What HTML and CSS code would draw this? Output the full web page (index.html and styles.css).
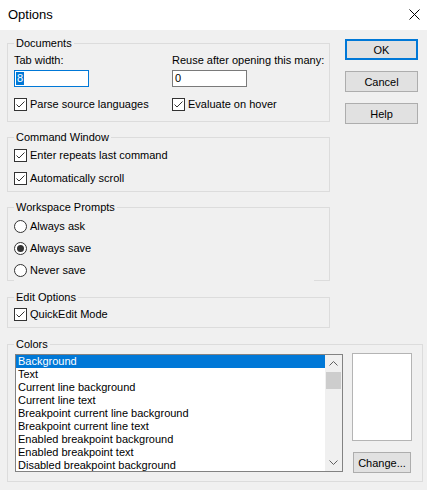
FILE: index.html
```html
<!DOCTYPE html>
<html>
<head>
<meta charset="utf-8">
<link rel="stylesheet" href="styles.css">
</head>
<body>
<div class="titlebar">
  <span class="title">Options</span>
  <svg class="close" width="11" height="11" viewBox="0 0 11 11"><path d="M0.5 0.5 L10.5 10.5 M10.5 0.5 L0.5 10.5" stroke="#000" stroke-width="1" fill="none"/></svg>
</div>
<div class="main">
  <div class="top">
    <div class="left">
      <fieldset class="group docs">
        <legend>Documents</legend>
        <div class="docs-grid">
          <div class="lbl">Tab width:</div>
          <div class="lbl">Reuse after opening this many:</div>
          <div class="textbox focus"><span class="sel">8</span></div>
          <div class="textbox"><span>0</span></div>
          <div class="check row-check"><svg class="cb" width="13" height="13" viewBox="0 0 13 13"><rect x="0.5" y="0.5" width="12" height="12" fill="#fff" stroke="#333"/><path d="M2.5 6.5 L5 9 L10.5 3.5" stroke="#333" fill="none"/></svg><span>Parse source languages</span></div>
          <div class="check row-check"><svg class="cb" width="13" height="13" viewBox="0 0 13 13"><rect x="0.5" y="0.5" width="12" height="12" fill="#fff" stroke="#333"/><path d="M2.5 6.5 L5 9 L10.5 3.5" stroke="#333" fill="none"/></svg><span>Evaluate on hover</span></div>
        </div>
      </fieldset>
      <fieldset class="group cmd">
        <legend>Command Window</legend>
        <div class="check first"><svg class="cb" width="13" height="13" viewBox="0 0 13 13"><rect x="0.5" y="0.5" width="12" height="12" fill="#fff" stroke="#333"/><path d="M2.5 6.5 L5 9 L10.5 3.5" stroke="#333" fill="none"/></svg><span>Enter repeats last command</span></div>
        <div class="check second"><svg class="cb" width="13" height="13" viewBox="0 0 13 13"><rect x="0.5" y="0.5" width="12" height="12" fill="#fff" stroke="#333"/><path d="M2.5 6.5 L5 9 L10.5 3.5" stroke="#333" fill="none"/></svg><span>Automatically scroll</span></div>
      </fieldset>
      <fieldset class="group ws">
        <legend>Workspace Prompts</legend>
        <div class="radio r1"><svg width="13" height="13" viewBox="0 0 13 13"><circle cx="6.5" cy="6.5" r="6" fill="#fff" stroke="#333"/></svg><span>Always ask</span></div>
        <div class="radio r2"><svg width="13" height="13" viewBox="0 0 13 13"><circle cx="6.5" cy="6.5" r="6" fill="#fff" stroke="#333"/><circle cx="6.5" cy="6.5" r="3.5" fill="#333"/></svg><span>Always save</span></div>
        <div class="radio r3"><svg width="13" height="13" viewBox="0 0 13 13"><circle cx="6.5" cy="6.5" r="6" fill="#fff" stroke="#333"/></svg><span>Never save</span></div>
      </fieldset>
      <fieldset class="group edit">
        <legend>Edit Options</legend>
        <div class="check first"><svg class="cb" width="13" height="13" viewBox="0 0 13 13"><rect x="0.5" y="0.5" width="12" height="12" fill="#fff" stroke="#333"/><path d="M2.5 6.5 L5 9 L10.5 3.5" stroke="#333" fill="none"/></svg><span>QuickEdit Mode</span></div>
      </fieldset>
    </div>
    <div class="buttons">
      <button class="btn default">OK</button>
      <button class="btn">Cancel</button>
      <button class="btn">Help</button>
    </div>
  </div>
  <fieldset class="group colors">
    <legend>Colors</legend>
    <div class="colors-row">
      <div class="listbox">
        <div class="items">
          <div class="item selected">Background</div>
          <div class="item">Text</div>
          <div class="item">Current line background</div>
          <div class="item">Current line text</div>
          <div class="item">Breakpoint current line background</div>
          <div class="item">Breakpoint current line text</div>
          <div class="item">Enabled breakpoint background</div>
          <div class="item">Enabled breakpoint text</div>
          <div class="item">Disabled breakpoint background</div>
        </div>
        <div class="scrollbar">
          <div class="arrow"><svg width="9" height="5" viewBox="0 0 9 5"><path d="M0.5 4.5 L4.5 0.5 L8.5 4.5" stroke="#606060" fill="none"/></svg></div>
          <div class="thumb"></div>
          <div class="track"></div>
          <div class="arrow"><svg width="9" height="5" viewBox="0 0 9 5"><path d="M0.5 0.5 L4.5 4.5 L8.5 0.5" stroke="#606060" fill="none"/></svg></div>
        </div>
      </div>
      <div class="side">
        <div class="swatch"></div>
        <button class="btn change">Change...</button>
      </div>
    </div>
  </fieldset>
</div>
</body>
</html>
```
FILE: styles.css
```css
* { box-sizing: border-box; }
html, body { margin: 0; padding: 0; }
body {
  background: #f0f0f0;
  font-family: "Liberation Sans", Arial, sans-serif;
  font-size: 11px;
  color: #000;
  width: 427px;
  height: 490px;
  overflow: hidden;
}
.titlebar {
  height: 30px;
  background: #fff;
  display: flex;
  align-items: center;
  justify-content: space-between;
  padding: 0 7px 0 8px;
}
.title { font-size: 13px; line-height: 16px; margin-top: -1px; }
.close { display: block; margin-top: -2px; }
.main { padding: 7px 0 0 7px; }
.top { display: flex; }
.left { width: 323px; }
.buttons {
  margin-left: 15px;
  padding-top: 2px;
  display: flex;
  flex-direction: column;
  gap: 11px;
}
.btn {
  width: 73px;
  height: 21px;
  background: #e1e1e1;
  border: 1px solid #adadad;
  font-family: inherit;
  font-size: 11px;
  color: #000;
  padding: 0;
  margin: 0;
}
.btn.default { border: 2px solid #0078d7; }
.group {
  margin: 0;
  padding: 0 6px;
  border: 1px solid #dcdcdc;
  min-inline-size: 0;
  width: 100%;
}
.group legend {
  padding: 0 2px;
  line-height: 13px;
  height: 13px;
}
.cmd { margin-top: 9px; padding-bottom: 6px; }
.ws { margin-top: 9px; padding-bottom: 3px; }
.edit { margin-top: 10px; padding-bottom: 6px; }
.docs { padding-bottom: 10px; }
.docs-grid {
  display: grid;
  grid-template-columns: 158px 1fr;
  margin-top: 4px;
}
.lbl { line-height: 13px; height: 13px; white-space: nowrap; }
.textbox {
  width: 75px;
  height: 17px;
  margin-top: 3px;
  background: #fff;
  border: 1px solid #7a7a7a;
  padding: 1px 1px;
  line-height: 13px;
}
.textbox.focus { border-color: #0078d7; }
.textbox span { display: inline-block; padding: 0 1px; }
.textbox .sel { background: #0078d7; color: #fff; }
.check, .radio {
  display: flex;
  align-items: center;
  gap: 3px;
  height: 13px;
  line-height: 13px;
  white-space: nowrap;
}
.check svg, .radio svg { display: block; flex: none; }
.row-check { margin-top: 11px; }
.cmd .first { margin-top: 5px; }
.cmd .second { margin-top: 10px; }
.edit .first { margin-top: 4px; }
.ws .r1 { margin-top: 6px; }
.ws .r2 { margin-top: 9px; }
.ws .r3 {
  margin-top: 9px;
  width: 300px;
  height: 17px;
  padding-bottom: 4px;
  margin-bottom: -4px;
  background: #f0f0f0;
  align-items: flex-start;
}
.colors { margin-top: 10px; width: 416px; padding: 0 10px 8px 6px; }
.colors-row { display: flex; margin-top: 3px; padding-left: 1px; }
.listbox {
  width: 328px;
  height: 118px;
  border: 1px solid #828282;
  background: #fff;
  display: flex;
}
.items { flex: 1; overflow: hidden; }
.item {
  height: 13px;
  line-height: 13px;
  padding-left: 2px;
  white-space: nowrap;
}
.item.selected { background: #0078d7; color: #fff; }
.scrollbar {
  width: 17px;
  background: #f0f0f0;
  display: flex;
  flex-direction: column;
}
.arrow {
  height: 17px;
  display: flex;
  align-items: center;
  justify-content: center;
}
.arrow svg { display: block; }
.thumb { height: 17px; margin: 0 1px; background: #cdcdcd; }
.track { flex: 1; }
.side { margin-left: 9px; margin-top: -1px; }
.swatch {
  width: 60px;
  height: 88px;
  background: #fff;
  border: 1px solid #b4b4b4;
}
.btn.change { width: 58px; margin-top: 11px; margin-left: 1px; }
```
